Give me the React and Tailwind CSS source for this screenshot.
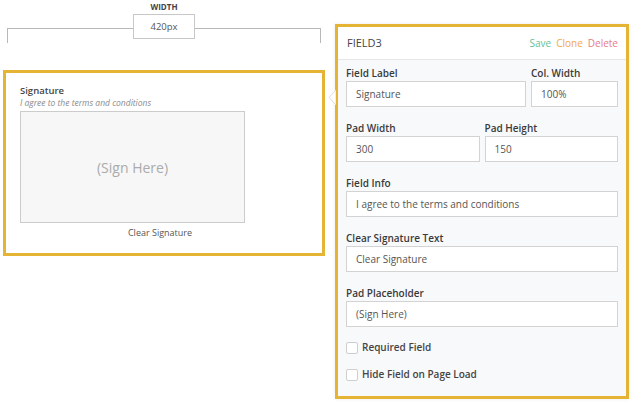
import React from "react";

const font = { fontFamily: '"Open Sans", "Noto Sans", Arial, sans-serif' };

function Field({ label, value, className = "" }) {
  return (
    <div className={"flex flex-col " + className}>
      <div className="text-[10px] leading-[15px] font-semibold text-[#3a3a3a]">{label}</div>
      <div className="h-[26px] border border-[#d3d3d3] bg-white flex items-center pl-[9px] text-[10px] text-[#555]">
        {value}
      </div>
    </div>
  );
}

function Check({ label }) {
  return (
    <div className="flex items-center h-[17px]">
      <div className="w-[12px] h-[12px] border border-[#cfcfcf] rounded-[2px] bg-white" />
      <div className="ml-[4px] text-[10px] font-semibold text-[#444]">{label}</div>
    </div>
  );
}

export default function App() {
  return (
    <div className="w-[642px] h-[412px] bg-white flex items-start overflow-hidden" style={font}>
      {/* Left column */}
      <div className="ml-[3px] w-[322px] flex flex-col">
        {/* Ruler */}
        <div className="mx-[4px] flex flex-col">
          <div className="h-[14px] text-center text-[8px] leading-[14px] font-bold text-[#444]">WIDTH</div>
          <div className="flex items-start">
            <div className="flex-1 mt-[14px] h-[15px] border-t border-l border-[#b8b8b8]" />
            <div className="w-[62px] h-[25px] border border-[#c8c8c8] bg-white text-center text-[9.5px] leading-[23px] text-[#555]">
              420px
            </div>
            <div className="flex-1 mt-[14px] h-[15px] border-t border-r border-[#b8b8b8]" />
          </div>
        </div>
        {/* Frame */}
        <div className="mt-[27px] h-[186px] border-[3px] border-[#e5b434] bg-white pl-[14px] pt-[12px] flex flex-col">
          <div className="text-[9.5px] leading-[12px] font-semibold text-[#444]">Signature</div>
          <div className="text-[8.5px] leading-[12px] italic text-[#8a8a8a]">I agree to the terms and conditions</div>
          <div className="mt-[2px] w-[225px] h-[112px] border border-[#cccccc] bg-[#f7f7f7] flex items-center justify-center text-[14px] text-[#ababab]">
            (Sign Here)
          </div>
          <div className="mt-[3px] w-[280px] text-center text-[9px] leading-[14px] text-[#555]">Clear Signature</div>
        </div>
      </div>

      {/* Right panel */}
      <div className="relative ml-[10px] mt-[24px] w-[294px] h-[375px] border-[3px] border-[#e5b434] bg-[#f8f9fb] flex flex-col shadow-[0_0_4px_rgba(0,0,0,0.08)]">
        <svg className="absolute left-[-10px] top-[63px]" width="8" height="15" viewBox="0 0 8 15">
          <polygon points="8,0 1,7.5 8,15" fill="#ffffff" stroke="#dcdcdc" strokeWidth="1" />
        </svg>
        <div className="h-[33px] bg-white border-b border-[#e6e6e6] flex items-center justify-between pl-[9px] pr-[8px]">
          <div className="text-[11px] text-[#444]">FIELD3</div>
          <div className="flex gap-[5px] text-[10px]">
            <span className="text-[#63c09c]">Save</span>
            <span className="text-[#f2a748]">Clone</span>
            <span className="text-[#e67c87]">Delete</span>
          </div>
        </div>
        <div className="px-[8px] pt-[6px] flex flex-col">
          <div className="flex gap-[5px]">
            <Field label="Field Label" value="Signature" className="w-[180px]" />
            <Field label="Col. Width" value="100%" className="flex-1" />
          </div>
          <div className="mt-[14px] flex gap-[5px]">
            <Field label="Pad Width" value="300" className="flex-1" />
            <Field label="Pad Height" value="150" className="flex-1" />
          </div>
          <Field label="Field Info" value="I agree to the terms and conditions" className="mt-[14px]" />
          <Field label="Clear Signature Text" value="Clear Signature" className="mt-[14px]" />
          <Field label="Pad Placeholder" value="(Sign Here)" className="mt-[14px]" />
          <div className="mt-[12px] flex flex-col gap-[10px]">
            <Check label="Required Field" />
            <Check label="Hide Field on Page Load" />
          </div>
        </div>
      </div>
    </div>
  );
}
